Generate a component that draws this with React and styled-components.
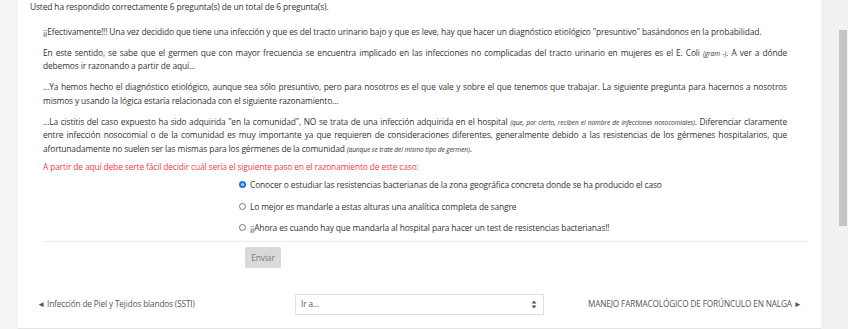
import React from 'react'
import styled, { createGlobalStyle } from 'styled-components'

const GlobalStyle = createGlobalStyle`
  html, body {
    margin: 0;
    padding: 0;
    background: #f4f4f4;
    font-family: "Open Sans", "Noto Sans", sans-serif;
    color: #333;
  }
`

function App() {
  const options = [
    'Conocer o estudiar las resistencias bacterianas de la zona geográfica concreta donde se ha producido el caso',
    'Lo mejor es mandarle a estas alturas una analítica completa de sangre',
    '¡¡Ahora es cuando hay que mandarla al hospital para hacer un test de resistencias bacterianas!!',
  ]
  return (
    <Page>
      <GlobalStyle />
      <Card>
        <Summary>Usted ha respondido correctamente 6 pregunta(s) de un total de 6 pregunta(s).</Summary>
        <Content>
          <Para>
            ¡¡Efectivamente!!! Una vez decidido que tiene una infección y que es del tracto urinario bajo y que es leve, hay que hacer un diagnóstico etiológico "presuntivo" basándonos en la probabilidad.
          </Para>
          <Para $justify>
            En este sentido, se sabe que el germen que con mayor frecuencia se encuentra implicado en las infecciones no complicadas del tracto urinario en mujeres es el E. Coli <Note>(gram -)</Note>. A ver a dónde debemos ir razonando a partir de aquí...
          </Para>
          <Para $justify>
            ...Ya hemos hecho el diagnóstico etiológico, aunque sea sólo presuntivo, pero para nosotros es el que vale y sobre el que tenemos que trabajar. La siguiente pregunta para hacernos a nosotros mismos y usando la lógica estaría relacionada con el siguiente razonamiento...
          </Para>
          <Para $justify>
            ...La cistitis del caso expuesto ha sido adquirida "en la comunidad", NO se trata de una infección adquirida en el hospital <Note>(que, por cierto, reciben el nombre de infecciones nosocomiales)</Note>. Diferenciar claramente entre infección nosocomial o de la comunidad es muy importante ya que requieren de consideraciones diferentes, generalmente debido a las resistencias de los gérmenes hospitalarios, que afortunadamente no suelen ser las mismas para los gérmenes de la comunidad <Note>(aunque se trate del mismo tipo de germen)</Note>.
          </Para>
          <Question>A partir de aquí debe serte fácil decidir cuál sería el siguiente paso en el razonamiento de este caso:</Question>
          <Options>
            {options.map((o, i) => (
              <Option key={i}>
                <Radio $checked={i === 0} />
                {o}
              </Option>
            ))}
          </Options>
          <Divider />
          <Actions>
            <Button>Enviar</Button>
          </Actions>
        </Content>
        <Nav>
          <NavLink>◄ Infección de Piel y Tejidos blandos (SSTI)</NavLink>
          <Select>
            <span>Ir a...</span>
            <svg width="6" height="9" viewBox="0 0 6 9">
              <path d="M3 0.5 L5.5 3.5 H0.5 Z M3 8.5 L5.5 5.5 H0.5 Z" fill="#555" />
            </svg>
          </Select>
          <NavLink $right>MANEJO FARMACOLÓGICO DE FORÚNCULO EN NALGA ►</NavLink>
        </Nav>
      </Card>
      <Side>
        <Thumb />
      </Side>
    </Page>
  )
}

const Page = styled.div`
  display: flex;
  height: 329px;
  overflow: hidden;
  padding-left: 18px;
`

const Card = styled.div`
  width: 803px;
  height: 328px;
  background: #fff;
  border-bottom: 1px solid #e4e4e4;
  display: flex;
  flex-direction: column;
  font-size: 8.4px;
  letter-spacing: -0.12px;
  line-height: 13.5px;
`

const Summary = styled.div`
  padding: 0 0 0 12px;
  height: 13.5px;
`

const Content = styled.div`
  padding: 11px 12px 0 25px;
`

const Para = styled.p`
  margin: 0 22px 7.5px 0;
  text-align: ${p => (p.$justify ? 'justify' : 'left')};
`

const Note = styled.i`
  font-size: 6.6px;
  line-height: 1;
  letter-spacing: -0.1px;
`

const Question = styled.p`
  margin: -3px 0 5px;
  color: #f03e3e;
`

const Options = styled.div`
  display: flex;
  flex-direction: column;
  gap: 8px;
  padding-left: 196px;
`

const Option = styled.label`
  display: flex;
  align-items: center;
  gap: 4px;
  height: 13.5px;
`

const Radio = styled.span`
  width: 7px;
  height: 7px;
  border-radius: 50%;
  box-sizing: border-box;
  border: ${p => (p.$checked ? '2px solid #1a73e8' : '1px solid #777')};
  background: ${p => (p.$checked ? '#1a73e8' : '#fff')};
  box-shadow: ${p => (p.$checked ? 'inset 0 0 0 1px #fff' : 'none')};
  flex: none;
`

const Divider = styled.hr`
  border: none;
  border-top: 1px solid #ececec;
  margin: 6px 0 5px;
`

const Actions = styled.div`
  padding-left: 202px;
`

const Button = styled.button`
  width: 36px;
  height: 21px;
  padding: 0;
  border: none;
  border-radius: 2px;
  background: #d9d9d9;
  color: #7a7a7a;
  font-family: inherit;
  font-size: 8.4px;
  letter-spacing: -0.12px;
`

const Nav = styled.div`
  display: flex;
  align-items: center;
  margin-top: 26px;
  padding-left: 19px;
  color: #555;
`

const NavLink = styled.a`
  font-size: 8.2px;
  ${p => p.$right ? 'margin-left: 44px;' : 'width: 258px;'}
`

const Select = styled.div`
  width: 249px;
  height: 21px;
  box-sizing: border-box;
  border: 1px solid #e0e0e0;
  display: flex;
  align-items: center;
  justify-content: space-between;
  padding: 0 6px 0 5px;
  font-size: 8.2px;
`

const Side = styled.div`
  flex: 1;
  background: #f1f1f1;
  padding-top: 30px;
  display: flex;
  justify-content: flex-end;
  padding-right: 1px;
`

const Thumb = styled.div`
  width: 8px;
  height: 196px;
  background: #c4c4c4;
`

export default App
